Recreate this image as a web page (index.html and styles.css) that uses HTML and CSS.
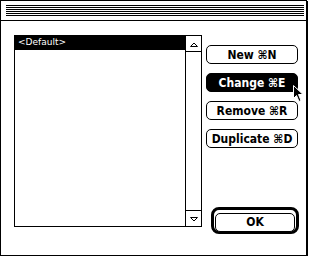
FILE: index.html
```html
<!DOCTYPE html>
<html>
  <head>
    <meta charset="utf-8" />
    <title>Choose item</title>
    <link rel="stylesheet" href="styles.css">
  </head>
  <body>
    <div class="window">
      <div class="title-bar">
        <div class="stripes"></div>
      </div>
      <div class="content">
        <div class="list-box">
          <ul class="list">
            <li class="selected">&lt;Default&gt;</li>
          </ul>
          <div class="scroll-bar">
            <div class="arrow up">
              <svg width="14" height="14" viewBox="0 0 14 14">
                <path d="M3.5 9.5 L7 6 L10.5 9.5 Z" fill="none" stroke="#000" stroke-width="1"/>
              </svg>
            </div>
            <div class="track"></div>
            <div class="arrow down">
              <svg width="14" height="14" viewBox="0 0 14 14">
                <path d="M3.5 5.5 L7 9 L10.5 5.5 Z" fill="none" stroke="#000" stroke-width="1"/>
              </svg>
            </div>
          </div>
        </div>
        <div class="buttons">
          <button class="btn">New &#8984;N</button>
          <button class="btn active">Change &#8984;E</button>
          <button class="btn">Remove &#8984;R</button>
          <button class="btn">Duplicate &#8984;D</button>
          <div class="default-ring">
            <button class="btn ok">OK</button>
          </div>
        </div>
      </div>
      <svg class="cursor" width="12" height="18" viewBox="0 0 12 18">
        <path d="M0.5 0.5 L0.5 13.5 L3.5 10.5 L6 16.5 L8 15.5 L5.5 9.5 L10 9.5 Z" fill="#000" stroke="#fff" stroke-width="1"/>
      </svg>
    </div>
  </body>
</html>
```
FILE: styles.css
```css
body,
html {
  margin: 0;
  padding: 0;
  background: #fff;
}
body {
  font-family: 'DejaVu Sans', sans-serif;
}

.window {
  position: relative;
  width: 305px;
  height: 254px;
  border: 1px solid #000;
  box-shadow: 1px 1px 0 #000;
  background: #fff;
}
.title-bar {
  height: 20px;
  border-bottom: 1px solid #000;
  padding: 4px 2px 0 5px;
  box-sizing: border-box;
}
.stripes {
  height: 11px;
  background: repeating-linear-gradient(
    to bottom,
    #000 0,
    #000 1px,
    #fff 1px,
    #fff 2px
  );
}

.content {
  display: flex;
  padding: 14px 0 0 13px;
}
.list-box {
  display: flex;
  width: 186px;
  height: 190px;
  border: 1px solid #000;
}
.list {
  flex: 1;
  list-style: none;
  margin: 0;
  padding: 0;
}
.list li {
  height: 14px;
  line-height: 13px;
  font-size: 9px;
  padding-left: 3px;
}
.list li.selected {
  background: #000;
  color: #fff;
}
.scroll-bar {
  width: 15px;
  border-left: 1px solid #000;
  display: flex;
  flex-direction: column;
}
.arrow {
  height: 15px;
  display: flex;
  align-items: center;
  justify-content: center;
}
.arrow.up {
  border-bottom: 1px solid #000;
}
.arrow.down {
  border-top: 1px solid #000;
}
.track {
  flex: 1;
}

.buttons {
  display: flex;
  flex-direction: column;
  gap: 9px;
  margin-left: 4px;
  padding-top: 10px;
}
.btn {
  width: 92px;
  height: 19px;
  border: 1px solid #000;
  border-radius: 5px;
  background: #fff;
  color: #000;
  font-family: 'DejaVu Sans Condensed', 'DejaVu Sans', sans-serif;
  font-weight: bold;
  font-size: 12px;
  padding: 0;
  line-height: 16px;
}
.btn.active {
  background: #000;
  color: #fff;
}
.default-ring {
  margin: 50px 0 0 5px;
  width: 80px;
  height: 19px;
  border: 3px solid #000;
  border-radius: 8px;
  padding: 1px;
}
.btn.ok {
  width: 80px;
  height: 19px;
  border-radius: 5px;
}

.cursor {
  position: absolute;
  left: 292px;
  top: 84px;
}
```
